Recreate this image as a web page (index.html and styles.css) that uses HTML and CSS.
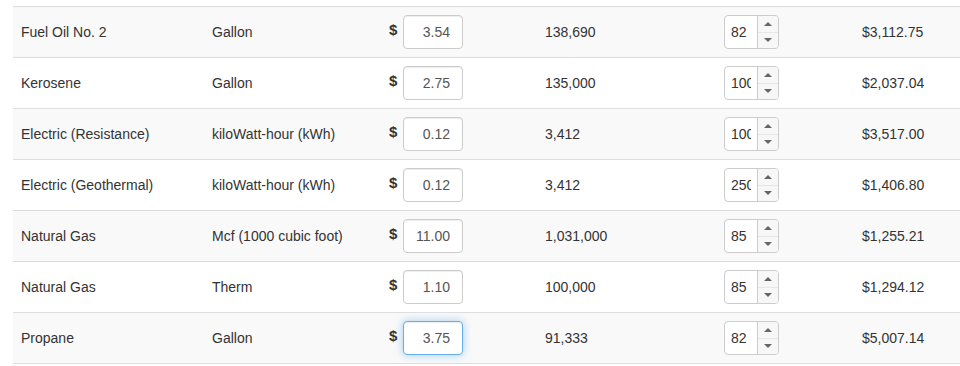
FILE: index.html
```html
<!DOCTYPE html>
<html lang="en">

<head>
  <meta charset="UTF-8" />
  <meta name="viewport" content="width=device-width, initial-scale=1.0" />
  <title>Fuel Cost Comparison</title>
  <link rel="stylesheet" href="styles.css">
</head>

<body>
  <table class="fuel-table">
    <colgroup>
      <col class="col-name">
      <col class="col-unit">
      <col class="col-price">
      <col class="col-btu">
      <col class="col-eff">
      <col class="col-cost">
    </colgroup>
    <tbody>
      <tr>
        <td>Fuel Oil No. 2</td>
        <td>Gallon</td>
        <td><div class="price"><span class="dollar">$</span><input class="price-input" type="text" value="3.54"></div></td>
        <td>138,690</td>
        <td><div class="qty"><input type="text" value="82"><div class="stepper"><span class="up"></span><span class="down"></span></div></div></td>
        <td>$3,112.75</td>
      </tr>
      <tr>
        <td>Kerosene</td>
        <td>Gallon</td>
        <td><div class="price"><span class="dollar">$</span><input class="price-input" type="text" value="2.75"></div></td>
        <td>135,000</td>
        <td><div class="qty"><input type="text" value="100"><div class="stepper"><span class="up"></span><span class="down"></span></div></div></td>
        <td>$2,037.04</td>
      </tr>
      <tr>
        <td>Electric (Resistance)</td>
        <td>kiloWatt-hour (kWh)</td>
        <td><div class="price"><span class="dollar">$</span><input class="price-input" type="text" value="0.12"></div></td>
        <td>3,412</td>
        <td><div class="qty"><input type="text" value="100"><div class="stepper"><span class="up"></span><span class="down"></span></div></div></td>
        <td>$3,517.00</td>
      </tr>
      <tr>
        <td>Electric (Geothermal)</td>
        <td>kiloWatt-hour (kWh)</td>
        <td><div class="price"><span class="dollar">$</span><input class="price-input" type="text" value="0.12"></div></td>
        <td>3,412</td>
        <td><div class="qty"><input type="text" value="250"><div class="stepper"><span class="up"></span><span class="down"></span></div></div></td>
        <td>$1,406.80</td>
      </tr>
      <tr>
        <td>Natural Gas</td>
        <td>Mcf (1000 cubic foot)</td>
        <td><div class="price"><span class="dollar">$</span><input class="price-input" type="text" value="11.00"></div></td>
        <td>1,031,000</td>
        <td><div class="qty"><input type="text" value="85"><div class="stepper"><span class="up"></span><span class="down"></span></div></div></td>
        <td>$1,255.21</td>
      </tr>
      <tr>
        <td>Natural Gas</td>
        <td>Therm</td>
        <td><div class="price"><span class="dollar">$</span><input class="price-input" type="text" value="1.10"></div></td>
        <td>100,000</td>
        <td><div class="qty"><input type="text" value="85"><div class="stepper"><span class="up"></span><span class="down"></span></div></div></td>
        <td>$1,294.12</td>
      </tr>
      <tr>
        <td>Propane</td>
        <td>Gallon</td>
        <td><div class="price"><span class="dollar">$</span><input class="price-input focused" type="text" value="3.75"></div></td>
        <td>91,333</td>
        <td><div class="qty"><input type="text" value="82"><div class="stepper"><span class="up"></span><span class="down"></span></div></div></td>
        <td>$5,007.14</td>
      </tr>
    </tbody>
  </table>
</body>

</html>
```

FILE: styles.css
```css
body {
  font-family: "Liberation Sans", Arial, sans-serif;
  font-size: 14px;
  line-height: 20px;
  color: #333;
  margin: 0;
  background-color: #fff;
  overflow: hidden;
}

.fuel-table {
  border-collapse: collapse;
  table-layout: fixed;
  width: 947px;
  margin: 6px 0 0 13px;
}

.col-name { width: 191px; }
.col-unit { width: 177px; }
.col-price { width: 156px; }
.col-btu { width: 179px; }
.col-eff { width: 138px; }
.col-cost { width: 106px; }

.fuel-table td {
  border-top: 1px solid #ddd;
  border-bottom: 1px solid #ddd;
  padding: 8px;
  height: 34px;
  vertical-align: middle;
  white-space: nowrap;
}

.fuel-table tr:nth-child(odd) td {
  background-color: #f9f9f9;
}

.price {
  display: flex;
  align-items: center;
}

.dollar {
  font-weight: bold;
  font-size: 15px;
  width: 8px;
  margin-right: 6px;
  margin-bottom: 5px;
}

.price-input {
  box-sizing: border-box;
  width: 60px;
  height: 34px;
  padding: 6px 12px;
  border: 1px solid #ccc;
  border-radius: 4px;
  font-family: inherit;
  font-size: 14px;
  color: #555;
  text-align: right;
  background-color: #fff;
  box-shadow: inset 0 1px 1px rgba(0, 0, 0, 0.075);
  outline: none;
}

.price-input.focused {
  border-color: #66afe9;
  box-shadow: inset 0 1px 1px rgba(0, 0, 0, 0.075), 0 0 8px rgba(102, 175, 233, 0.6);
}

.qty {
  display: flex;
  box-sizing: border-box;
  width: 55px;
  height: 34px;
  border: 1px solid #ccc;
  border-radius: 4px;
  background-color: #fff;
  overflow: hidden;
}

.qty input {
  box-sizing: border-box;
  width: 32px;
  height: 32px;
  border: none;
  padding: 0 6px 0 6px;
  font-family: inherit;
  font-size: 14px;
  color: #333;
  background: transparent;
  outline: none;
}

.stepper {
  display: flex;
  flex-direction: column;
  width: 21px;
  border-left: 1px solid #ccc;
  background-color: #f7f7f7;
}

.stepper span {
  flex: 1;
  display: flex;
  align-items: center;
  justify-content: center;
}

.stepper .down {
  border-top: 1px solid #e6e6e6;
}

.stepper .up::after,
.stepper .down::after {
  content: "";
  border-left: 4px solid transparent;
  border-right: 4px solid transparent;
}

.stepper .up::after {
  border-bottom: 4px solid #666;
}

.stepper .down::after {
  border-top: 4px solid #666;
}
```
